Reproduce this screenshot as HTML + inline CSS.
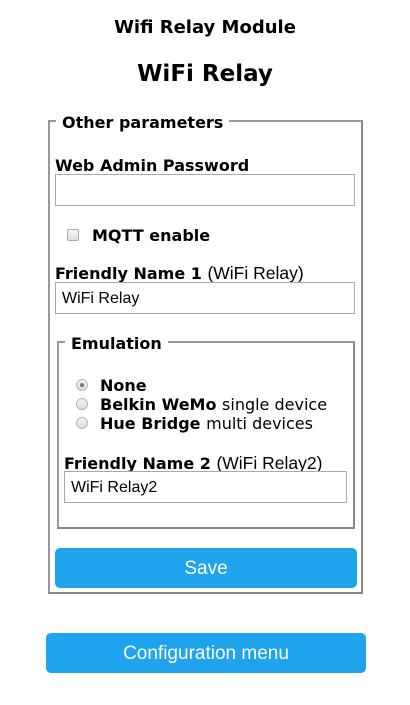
<!DOCTYPE html>
<html><head><meta charset="utf-8"><style>
*{margin:0;padding:0;box-sizing:border-box}
body{width:410px;height:705px;background:#fff;position:relative;font-family:"DejaVu Sans","Liberation Sans",sans-serif;color:#000;overflow:hidden}
.a{position:absolute;white-space:nowrap}
.b{font-weight:bold}
.c{text-align:center;left:0;width:410px}
.fs{position:absolute;border:2px solid #999;border-right-color:#888;border-bottom-color:#888}
.lg{position:absolute;background:#fff;padding:0 6px;font-weight:bold;font-size:16px;line-height:20px}
.in{position:absolute;border:1px solid #a9a9a9;background:#fff;font-family:"Liberation Sans",sans-serif;font-size:16px;line-height:30px;padding-left:6px}
.n{font-weight:normal}
.p{font-weight:normal;font-family:"Liberation Sans",sans-serif;font-size:17.5px}
.rd{position:absolute;width:12px;height:12px;border-radius:50%;border:1px solid #b5b5b5;background:linear-gradient(#f4f4f4,#dcdcdc)}
.btn{position:absolute;background:#1fa3ec;border-radius:5px;color:#fff;font-family:"Liberation Sans",sans-serif;font-size:19px;text-align:center}
</style></head><body>
<div class="a c b" style="top:16px;font-size:18px;line-height:24px">Wifi Relay Module</div>
<div class="a c b" style="top:59px;font-size:23px;line-height:30px">WiFi Relay</div>

<div class="fs" style="left:48px;top:120px;width:315px;height:474px"></div>
<div class="lg" style="left:56px;top:113px">Other parameters</div>

<div class="a b" style="left:55px;top:156px;font-size:16px;line-height:20px">Web Admin Password</div>
<div class="in" style="left:55px;top:174px;width:300px;height:32px"></div>

<div class="a" style="left:67px;top:229px;width:12px;height:12px;border:1px solid #aaa;border-radius:2px;background:linear-gradient(#f6f6f6,#dedede)"></div>
<div class="a b" style="left:92px;top:226px;font-size:16px;line-height:20px">MQTT enable</div>

<div class="a b" style="left:55px;top:263px;font-size:16px;line-height:20px">Friendly Name 1 <span class="p">(WiFi Relay)</span></div>
<div class="in" style="left:55px;top:282px;width:300px;height:32px;line-height:31px">WiFi Relay</div>

<div class="fs" style="left:57px;top:341px;width:298px;height:188px"></div>
<div class="lg" style="left:65px;top:334px">Emulation</div>

<div class="rd" style="left:76px;top:379px"><div style="position:absolute;left:3px;top:3px;width:4px;height:4px;border-radius:50%;background:#777"></div></div>
<div class="rd" style="left:76px;top:398px"></div>
<div class="rd" style="left:76px;top:417px"></div>
<div class="a b" style="left:100px;top:376px;font-size:16px;line-height:20px">None</div>
<div class="a b" style="left:100px;top:395px;font-size:16px;line-height:20px">Belkin WeMo <span class="n">single device</span></div>
<div class="a b" style="left:100px;top:414px;font-size:16px;line-height:20px">Hue Bridge <span class="n">multi devices</span></div>

<div class="a b" style="left:64px;top:453px;font-size:16px;line-height:20px">Friendly Name 2 <span class="p">(WiFi Relay2)</span></div>
<div class="in" style="left:64px;top:471px;width:283px;height:32px;line-height:31px">WiFi Relay2</div>

<div class="btn" style="left:55px;top:548px;width:302px;height:40px;line-height:41px">Save</div>
<div class="btn" style="left:46px;top:633px;width:320px;height:40px;line-height:41px">Configuration menu</div>
</body></html>
